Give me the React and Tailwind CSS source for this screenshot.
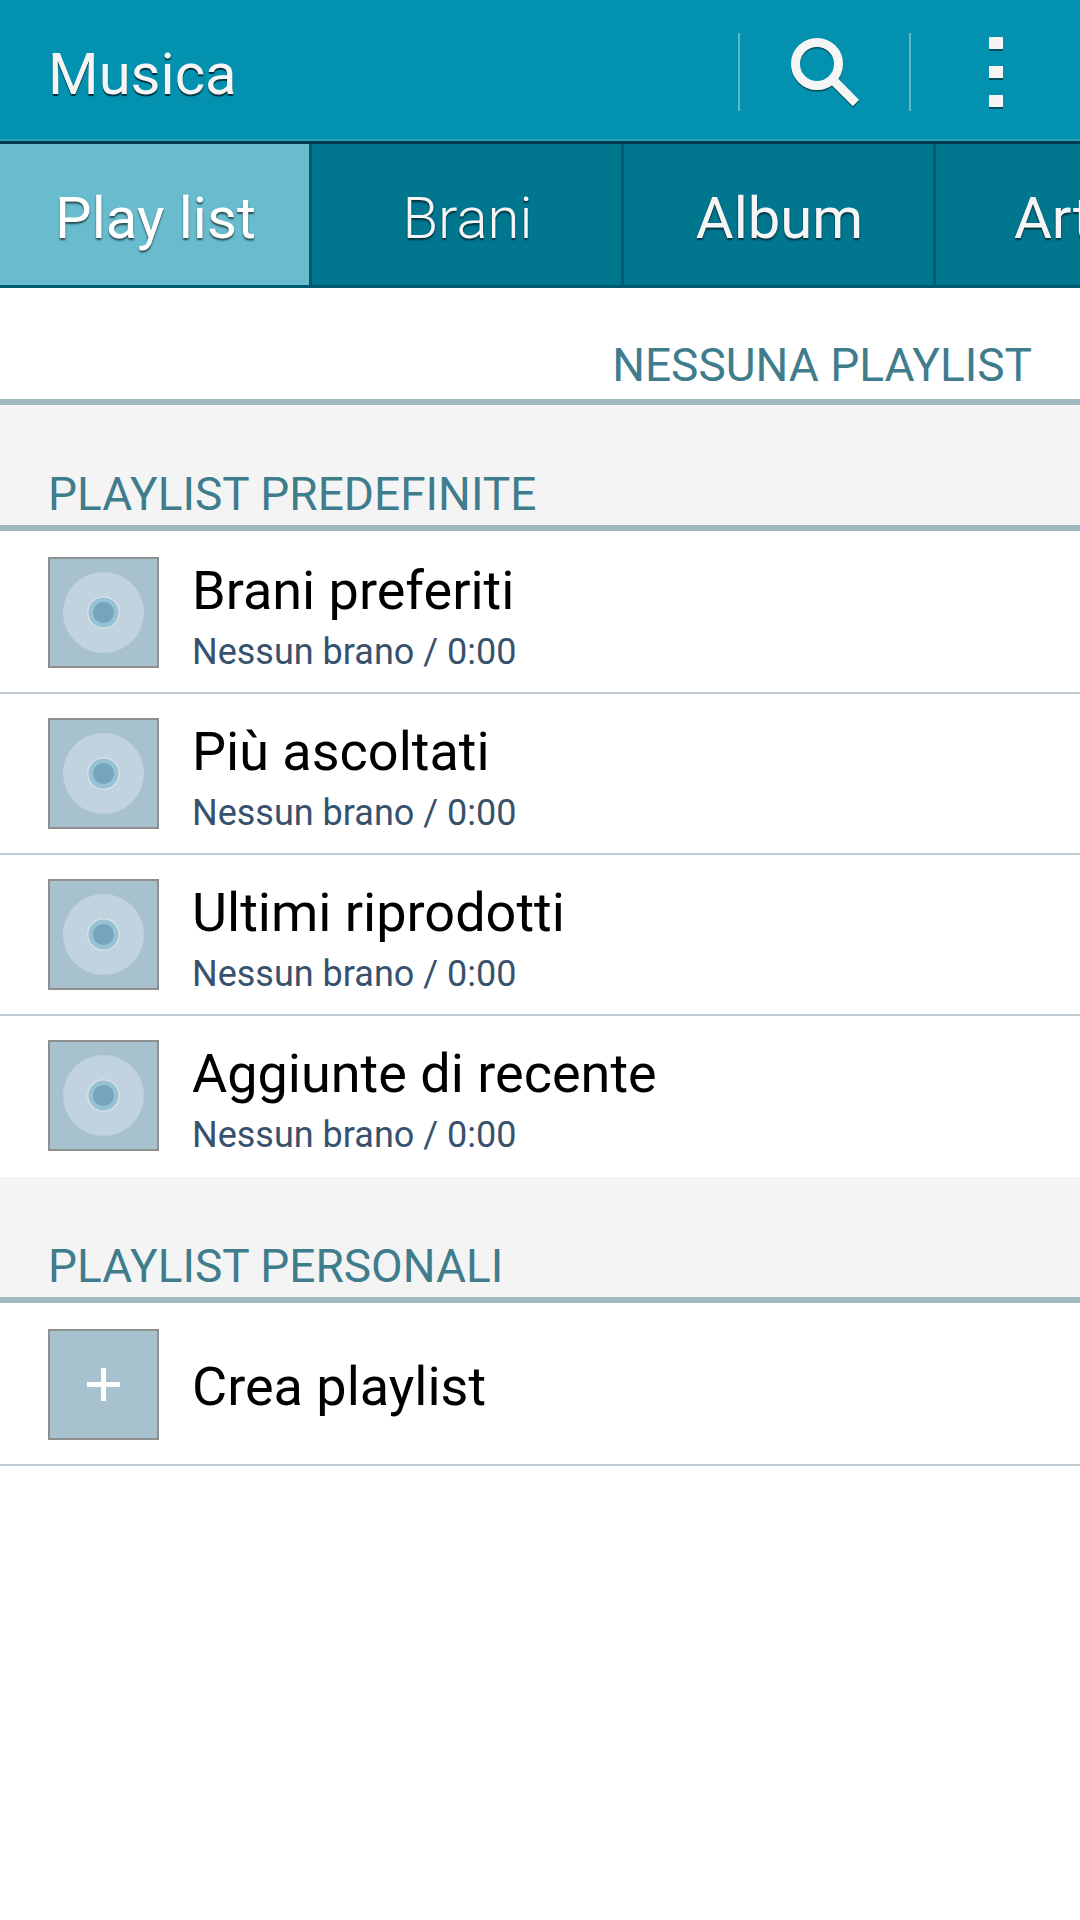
const tabs = [
  { name: 'Play list', active: true },
  { name: 'Brani', light: true },
  { name: 'Album' },
  { name: 'Artisti' },
]

const playlists = ['Brani preferiti', 'Più ascoltati', 'Ultimi riprodotti', 'Aggiunte di recente']

function SearchIcon() {
  return (
    <svg className="h-[72px] w-[68px]" viewBox="0 0 68 72" fill="none" aria-hidden="true">
      <g stroke="#024f60" strokeWidth="9">
        <circle cx="26" cy="28.500" r="21.5" />
        <path d="M41 43.500L65 67.500" />
      </g>
      <g stroke="#f5f5f5" strokeWidth="9">
        <circle cx="26" cy="27" r="21.5" />
        <path d="M41 42L65 66" />
      </g>
    </svg>
  )
}

function MoreIcon() {
  return (
    <svg className="h-[72px] w-[14px]" viewBox="0 0 14 72" aria-hidden="true">
      <path fill="#024f60" d="M0 12h14v2H0zM0 41h14v2H0zM0 70h14v2H0z" />
      <path fill="#f5f5f5" d="M0 0h14v12H0zM0 29h14v12H0zM0 58h14v12H0z" />
    </svg>
  )
}

function DiscIcon() {
  return (
    <svg className="h-[107px] w-[107px]" viewBox="0 0 107 107" aria-hidden="true">
      <circle cx="53.5" cy="53.5" r="40.500" fill="#c1d3de" />
      <circle cx="53.5" cy="53.5" r="15.700" fill="#97c1d4" stroke="#dce6ec" strokeWidth="1.200" />
      <circle cx="53.5" cy="53.5" r="10.500" fill="#75a5bc" />
    </svg>
  )
}

function PlusIcon() {
  return (
    <svg className="h-[33px] w-[33px]" viewBox="0 0 33 33" aria-hidden="true">
      <path fill="#fff" d="M14 0h5v14h14v5H19v14h-5V19H0v-5h14z" />
    </svg>
  )
}

function SectionTitle({ children }) {
  return (
    <h2 className="flex h-[126px] items-end border-b-6 border-[#a0b9bf] bg-[#f4f4f4] px-12 pb-[1px] text-[46px] leading-[60px] text-[#3f7c8c]">
      {children}
    </h2>
  )
}

function Row({ icon, title, info }) {
  return (
    <li className="border-b-2 border-[#bfcad3]">
      <button type="button" className="flex h-[159px] w-full items-center px-12 text-left">
        <span className="flex h-[111px] w-[111px] shrink-0 items-center justify-center border-2 border-[#8f8f8f] bg-[#a7c2ce]">
          {icon}
        </span>
        <span className={`ml-[33px] flex flex-col ${info ? 'pt-[12px]' : 'pt-[3px]'}`}>
          <span className="text-[54px] leading-[67px] text-black">{title}</span>
          {info && <span className="text-[36px] leading-[57px] text-[#38516d]">{info}</span>}
        </span>
      </button>
    </li>
  )
}

export default function App() {
  return (
    <div className="min-h-screen bg-white font-[Roboto,sans-serif]">
      <header className="flex h-36 items-center border-b-3 border-[#003b54] bg-[#0292af] pl-12 shadow-[inset_0_-2px_0_#27a1ba]">
        <h1 className="flex-1 pt-[6px] text-[58px] leading-[68px] text-[#f5f5f5] [text-shadow:0_2px_1px_#00303c]">Musica</h1>
        <button type="button" aria-label="Cerca" className="mt-[2px] flex h-[78px] w-[171px] items-center justify-center border-l-2 border-[#5dbacd] pt-[2px]">
          <SearchIcon />
        </button>
        <button type="button" aria-label="Altre opzioni" className="mt-[2px] flex h-[78px] w-[171px] items-center justify-center border-l-2 border-[#5dbacd] pt-[2px]">
          <MoreIcon />
        </button>
      </header>

      <nav className="flex overflow-hidden bg-[#00778f]">
        {tabs.map((tab) => (
          <button
            key={tab.name}
            type="button"
            className={`flex h-36 w-[312px] shrink-0 items-center justify-center border-r-3 border-b-3 border-[#005c6e] pt-[6px] pl-[2px] text-[58px] leading-[68px] [text-shadow:0_2px_2px_rgba(0,0,0,0.6)] ${
              tab.active ? 'bg-[#68bcce] text-white' : 'text-[#f5f5f5]'
            } ${tab.light ? 'font-light' : 'font-normal'}`}
          >
            {tab.name}
          </button>
        ))}
      </nav>

      <main>
        <p className="flex h-[117px] items-end justify-end border-b-6 border-[#a0b9bf] px-12 pb-1 text-[46px] leading-[60px] text-[#3f7c8c]">
          NESSUNA PLAYLIST
        </p>

        <SectionTitle>PLAYLIST PREDEFINITE</SectionTitle>
        <ul className="pt-[2px] [&>li:last-child]:border-transparent">
          {playlists.map((title) => (
            <Row key={title} icon={<DiscIcon />} title={title} info="Nessun brano / 0:00" />
          ))}
        </ul>

        <SectionTitle>PLAYLIST PERSONALI</SectionTitle>
        <ul className="pt-[2px]">
          <Row icon={<PlusIcon />} title="Crea playlist" />
        </ul>
      </main>
    </div>
  )
}
